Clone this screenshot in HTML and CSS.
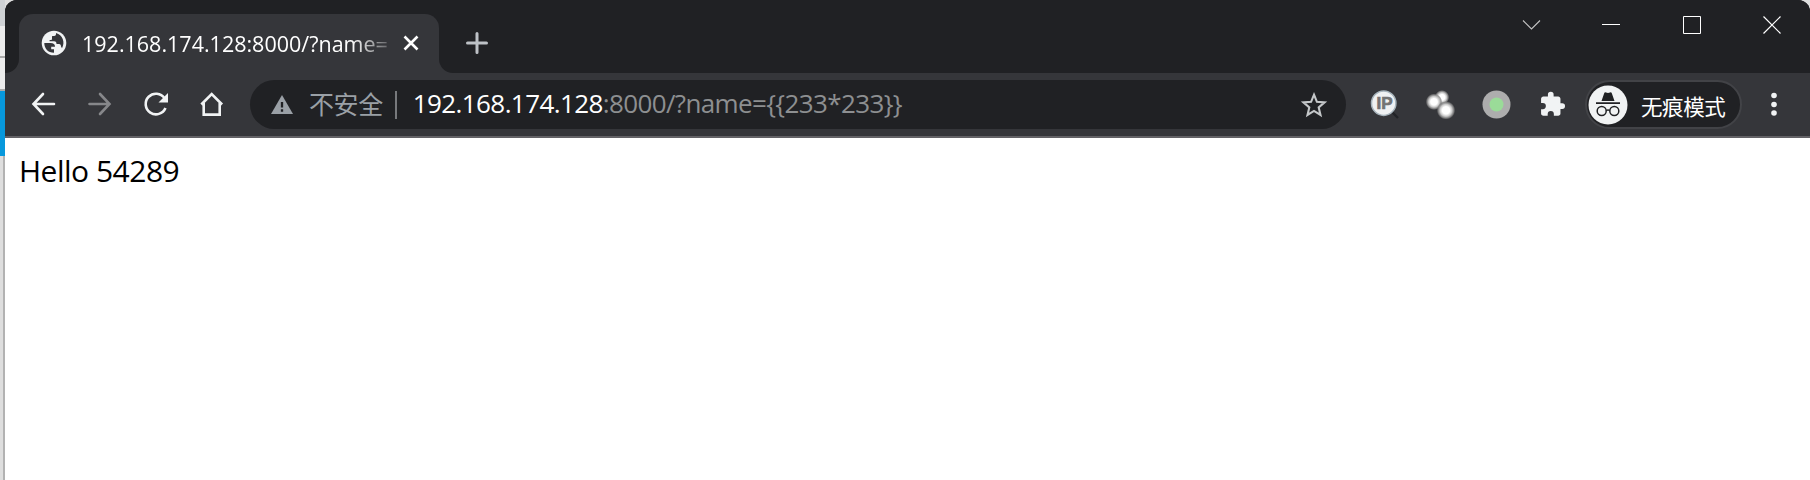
FILE: index.html
```html
<!DOCTYPE html>
<html lang="zh-CN">
<head>
<meta charset="utf-8">
<title>192.168.174.128:8000/?name={{233*233}}</title>
<link rel="stylesheet" href="styles.css">
</head>
<body>
<div class="desktop">
  <div class="backdrop">
    <div class="backdrop-top"></div>
    <div class="backdrop-row"></div>
    <div class="backdrop-row"></div>
    <div class="backdrop-blue"></div>
    <div class="backdrop-rest"></div>
  </div>
  <div class="window">
    <header class="tabstrip">
      <div class="tab-lead"></div>
      <div class="tab">
        <svg class="globe" width="26" height="26" viewBox="0 0 26 26"><circle cx="13" cy="13" r="12.3" fill="#f1f3f4"/><path d="M3.300 13H9.500C12.500 13 14 14.200 14 16.800H10.200V19.300H13V22.800C7 22.800 3.300 18.500 3.300 13ZM15 3V4.300C15 5.600 14 6.200 11.300 6.200V8.700C11.300 9.600 10.500 9.900 8.600 9.900V11.300H13C15 11.300 15.500 12.500 15.500 14H18C19.500 14 20 15 20 16.500L21 18.200C24.500 12 21.500 5 15 3Z" fill="#35363a"/><path d="M11 6.200H15V9.500H11Z" fill="#35363a"/></svg>
        <span class="tab-title">192.168.174.128:8000/?name=</span>
        <svg class="tab-close" width="16" height="16" viewBox="0 0 16 16"><path d="M1.500 1.500L14.500 14.500M14.500 1.500L1.500 14.500" stroke="#fff" stroke-width="2.600"/></svg>
      </div>
      <div class="tab-tail">
        <svg class="new-tab" width="22" height="22" viewBox="0 0 22 22"><path d="M11 1.500V20.500M1.500 11H20.500" stroke="#bdc1c6" stroke-width="3" stroke-linecap="round"/></svg>
        <div class="controls">
          <svg width="80" height="50" viewBox="0 0 80 50"><path d="M32 20.500L40.500 29L49 20.500" fill="none" stroke="#c4c4c4" stroke-width="1.100"/></svg>
          <svg width="80" height="50" viewBox="0 0 80 50"><path d="M31 24.500H49" stroke="#fff"/></svg>
          <svg width="80" height="50" viewBox="0 0 80 50"><path d="M32.500 16.500H49.500V33.500H32.500Z" fill="none" stroke="#fff"/></svg>
          <svg width="80" height="50" viewBox="0 0 80 50"><path d="M32.500 16.500L49.500 33.500M49.500 16.500L32.500 33.500" stroke="#fff" stroke-width="1.200"/></svg>
        </div>
      </div>
    </header>
    <nav class="toolbar">
      <svg class="btn" viewBox="0 0 56 48"><path d="M38 24H18M27 14L17.500 24L27 34" fill="none" stroke="#f1f3f4" stroke-width="2.600" stroke-linecap="round"/></svg>
      <svg class="btn" viewBox="0 0 56 48"><path d="M17.500 24H37M28 14L37.500 24L28 34" fill="none" stroke="#86878a" stroke-width="2.600" stroke-linecap="round"/></svg>
      <svg class="btn" viewBox="0 0 56 48"><path d="M36.500 18.200A10.300 10.300 0 1 0 37.500 28" fill="none" stroke="#f1f3f4" stroke-width="2.600"/><path d="M40 13V22.500H30.500Z" fill="#f1f3f4"/></svg>
      <svg class="btn" viewBox="0 0 56 48"><path d="M17.300 24.500L27.700 14.200L38.100 24.500M19.700 23V34.600H35.700V23" fill="none" stroke="#f1f3f4" stroke-width="2.600"/></svg>
      <div class="omnibox">
        <svg class="warn" width="22" height="20" viewBox="0 0 22 20"><path d="M11 0L22 19H0Z" fill="#9aa0a6"/><path d="M11 7V12.500M11 14.200V16.800" stroke="#202124" stroke-width="2.300"/></svg>
        <span class="insecure">不安全</span>
        <span class="divider"></span>
        <span class="url"><span class="host">192.168.174.128</span>:8000/?name={{233*233}}</span>
        <svg class="star" width="28" height="28" viewBox="0 0 28 28"><path d="M14 3.700L16.900 10.800L24.600 11.400L18.700 16.400L20.500 23.900L14 19.900L7.500 23.900L9.300 16.400L3.400 11.400L11.100 10.800Z" fill="none" stroke="#c4c7c9" stroke-width="2.100"/></svg>
      </div>
      <svg class="btn" viewBox="0 0 56 48"><path d="M36 32L42 38" stroke="#222427" stroke-width="2.400"/><circle cx="27.700" cy="23.200" r="12.200" fill="#eff1f2" stroke="#a7b4bc" stroke-width="1.500"/><text x="28.500" y="29.300" class="ip">IP</text></svg>
      <svg class="btn" viewBox="0 0 56 48"><defs><radialGradient id="glow"><stop offset=".4" stop-color="#fff"/><stop offset=".65" stop-color="#c8c8c8"/><stop offset=".85" stop-color="#8c8c8c" stop-opacity=".8"/><stop offset="1" stop-color="#777" stop-opacity="0"/></radialGradient></defs><circle cx="30" cy="17.300" r="7.300" fill="url(#glow)"/><circle cx="22" cy="21.800" r="8.300" fill="url(#glow)"/><circle cx="34" cy="30.300" r="9.300" fill="url(#glow)"/></svg>
      <svg class="btn" viewBox="0 0 56 48"><circle cx="28.500" cy="24.500" r="14" fill="#adadad"/><circle cx="28.500" cy="24.500" r="7" fill="#9adb98"/></svg>
      <svg class="btn" viewBox="0 0 56 48"><path transform="translate(14.800 10.700) scale(1.140)" fill="#f1f3f4" d="M20.500 11H19V7c0-1.100-.9-2-2-2h-4V3.500a2.500 2.500 0 0 0-5 0V5H4c-1.100 0-2 .9-2 2v3.800h1.500a2.700 2.700 0 0 1 0 5.400H2V20c0 1.100.9 2 2 2h3.800v-1.500a2.700 2.700 0 0 1 5.400 0V22H17c1.100 0 2-.9 2-2v-4h1.500a2.500 2.500 0 0 0 0-5z"/></svg>
      <div class="chip">
        <svg width="40" height="40" viewBox="0 0 40 40"><circle cx="20" cy="20" r="19.500" fill="#f1f3f4"/><path d="M13.500 16L16.200 8.300Q16.600 7 18 7.500L20 8L22 7.500Q23.400 7 23.800 8.300L26.500 16ZM8 17.300H32V19H8Z" fill="#202124"/><g fill="none" stroke="#202124" stroke-width="1.500"><circle cx="13.700" cy="26" r="4.500"/><circle cx="26.300" cy="26" r="4.500"/><path d="M18.200 25.500Q20 24.300 21.800 25.500"/></g></svg>
        <span class="chip-label">无痕模式</span>
      </div>
      <svg class="btn menu" viewBox="0 0 56 48"><g fill="#f1f3f4"><circle cx="28" cy="15.500" r="2.800"/><circle cx="28" cy="24.500" r="2.800"/><circle cx="28" cy="33" r="2.800"/></g></svg>
    </nav>
    <main class="page">Hello 54289</main>
  </div>
</div>
</body>
</html>
```
FILE: styles.css
```css
* { box-sizing: border-box; }
body { margin: 0; overflow: hidden; font-family: "Open Sans", "Noto Sans CJK SC", sans-serif; }
svg { display: block; flex: none; }
.desktop { display: flex; width: 1810px; height: 480px; background: #dedede; }
.backdrop { display: flex; flex-direction: column; width: 5px; flex: none; }
.backdrop-top { height: 26px; background: #cfd2d5; }
.backdrop-row { height: 32px; background: #ececec; border-bottom: 2px solid #aaa; }
.backdrop-row + .backdrop-row { height: 33px; }
.backdrop-blue { height: 65px; background: #0798dc; }
.backdrop-rest { flex: 1; background: #dedede; border-right: 2px solid #b2b2b2; }
.window { flex: 1; display: flex; flex-direction: column; border-radius: 12px 12px 0 0; overflow: hidden; background: #35363a; }
.tabstrip { height: 73px; display: flex; align-items: flex-end; background: #35363a; }
.tab-lead, .tab-tail { align-self: stretch; background: #202124; }
.tab-lead { width: 14px; border-bottom-right-radius: 14px; }
.tab { width: 420px; height: 59px; display: flex; align-items: center; padding-left: 22px; background: #35363a; border-radius: 14px 14px 0 0; box-shadow: 0 -14px 0 14px #202124; clip-path: inset(-14px 0 0 0); }
.globe { margin-bottom: 1px; }
.tab-title { width: 306px; margin-left: 15px; white-space: nowrap; color: #fff; font-size: 21.5px; line-height: 30px; letter-spacing: 0; mask-image: linear-gradient(90deg, #000 88%, transparent 104%); }
.tab-close { margin: 0 0 1px 15px; }
.tab-tail { flex: 1; display: flex; justify-content: space-between; border-bottom-left-radius: 14px; }
.new-tab { margin: 32px 0 0 27px; }
.controls { display: flex; margin-right: -1px; }
.toolbar { height: 65px; display: flex; align-items: flex-start; padding: 7px 8px 0 11px; border-bottom: 2px solid #636266; }
.btn { width: 56px; height: 48px; }
.omnibox { width: 1096px; height: 49px; margin: 0 10px; display: flex; align-items: center; padding-left: 21px; border-radius: 25px; background: #202124; white-space: nowrap; }
.insecure { margin: 0 0 3px 16px; color: #9aa0a6; font: 400 25px/40px "Noto Sans CJK SC", sans-serif; letter-spacing: -.4px; }
.divider { width: 2px; height: 28px; margin-left: 12px; background: #77797c; }
.url { margin: 0 0 3px 16px; color: #8d8f91; font-size: 26px; line-height: 40px; letter-spacing: -.62px; }
.host { color: #fff; letter-spacing: -.6px; }
.star { margin: 0 18px 0 auto; }
.ip { font: 900 17px "Liberation Sans", sans-serif; fill: #737373; stroke: #737373; stroke-width: .7px; text-anchor: middle; }
.chip { width: 157px; height: 49px; margin-left: 5px; display: flex; align-items: center; padding-left: 1px; border: 2px solid #424347; border-radius: 25px; background: #202124; white-space: nowrap; }
.chip-label { margin: 2px 0 0 13px; color: #fff; font: 400 21.5px/30px "Noto Sans CJK SC", sans-serif; letter-spacing: -.4px; }
.menu { margin-left: 4px; }
.page { flex: 1; padding: 12px 14px; background: #fff; color: #000; font-size: 30px; line-height: 42px; letter-spacing: -.5px; }
```
